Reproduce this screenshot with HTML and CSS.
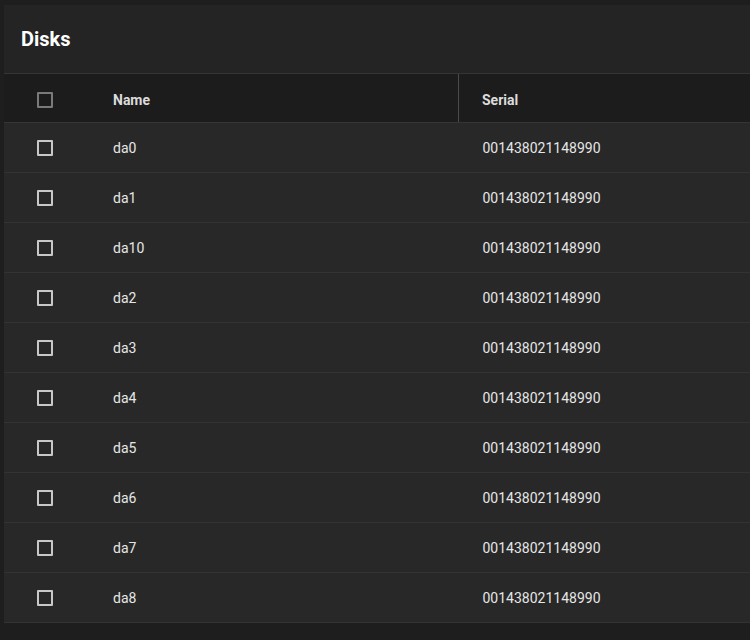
FILE: index.html
```html
<!DOCTYPE html>
<html>

<head>
    <title>Disks</title>
    <link rel="stylesheet" href="styles.css">
</head>

<body>

    <div class="card">
        <div class="card-header">
            <h1>Disks</h1>
        </div>
        <table class="disks">
            <thead>
                <tr>
                    <th class="col-select"><span class="checkbox"></span></th>
                    <th class="col-name">Name</th>
                    <th class="col-serial">Serial</th>
                </tr>
            </thead>
            <tbody>
                <tr><td class="col-select"><span class="checkbox"></span></td><td>da0</td><td class="col-serial">001438021148990</td></tr>
                <tr><td class="col-select"><span class="checkbox"></span></td><td>da1</td><td class="col-serial">001438021148990</td></tr>
                <tr><td class="col-select"><span class="checkbox"></span></td><td>da10</td><td class="col-serial">001438021148990</td></tr>
                <tr><td class="col-select"><span class="checkbox"></span></td><td>da2</td><td class="col-serial">001438021148990</td></tr>
                <tr><td class="col-select"><span class="checkbox"></span></td><td>da3</td><td class="col-serial">001438021148990</td></tr>
                <tr><td class="col-select"><span class="checkbox"></span></td><td>da4</td><td class="col-serial">001438021148990</td></tr>
                <tr><td class="col-select"><span class="checkbox"></span></td><td>da5</td><td class="col-serial">001438021148990</td></tr>
                <tr><td class="col-select"><span class="checkbox"></span></td><td>da6</td><td class="col-serial">001438021148990</td></tr>
                <tr><td class="col-select"><span class="checkbox"></span></td><td>da7</td><td class="col-serial">001438021148990</td></tr>
                <tr><td class="col-select"><span class="checkbox"></span></td><td>da8</td><td class="col-serial">001438021148990</td></tr>
            </tbody>
        </table>
    </div>

</body>

</html>
```

FILE: styles.css
```css
body {
    font-family: Roboto, "Liberation Sans", sans-serif;
    background: #1e1e1e;
    margin: 0;
    padding: 5px 0 0 4px;
    overflow: hidden;
}

.card {
    background: #242424;
    width: 746px;
}

.card-header {
    height: 68px;
    display: flex;
    align-items: center;
    padding-left: 17px;
    border-bottom: 1px solid #353535;
}

.card-header h1 {
    margin: 0;
    font-size: 20px;
    font-weight: 700;
    color: #fff;
}

.disks {
    width: 100%;
    border-collapse: collapse;
    table-layout: fixed;
}

.disks th {
    background: #1c1c1c;
    height: 45px;
    padding: 3px 0 0 24px;
    text-align: left;
    font-size: 14px;
    font-weight: 700;
    color: #dcdcdc;
    border-bottom: 1px solid #353535;
}

.disks td {
    background: #282828;
    height: 49px;
    padding: 0 0 0 24px;
    font-size: 14px;
    color: #e6e6e6;
    border-bottom: 1px solid #333;
}

.disks .col-select {
    width: 52px;
    padding-left: 33px;
    line-height: 0;
}

.disks .col-name {
    width: 345px;
}

.disks th.col-serial {
    border-left: 1px solid #4a4a4a;
    padding-left: 23px;
}

.disks td.col-serial {
    padding-left: 24px;
}

.checkbox {
    display: inline-block;
    vertical-align: middle;
    width: 12px;
    height: 12px;
    border: 2px solid #c8c8c8;
    border-radius: 1px;
}

th .checkbox {
    border-color: #7a7a7a;
}
```
